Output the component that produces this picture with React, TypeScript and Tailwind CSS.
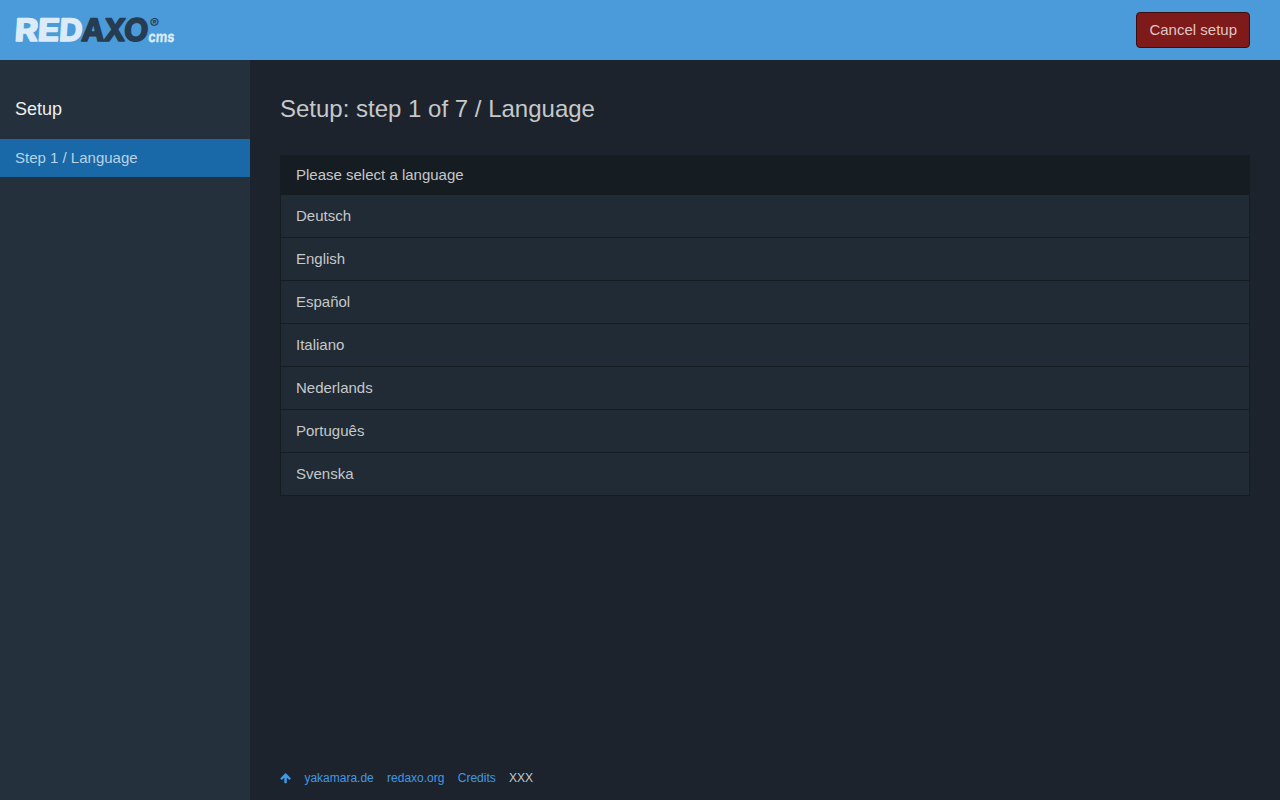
import React from "react";

const languages = ["Deutsch", "English", "Español", "Italiano", "Nederlands", "Português", "Svenska"];

function Logo() {
  return (
    <svg
      width="160"
      height="26"
      viewBox="0 0 160 26"
      role="img"
      aria-label="REDAXO CMS"
      className="block overflow-visible font-['Inter',sans-serif] font-bold not-italic"
    >
      <g transform="translate(0 25) skewX(-4)" strokeLinejoin="round">
        <g fontSize="31" strokeWidth="1.6">
          <g className="fill-[#dbebf7] stroke-[#dbebf7]">
            <text x="-1.2" y="-1" textLength="23.5" lengthAdjust="spacingAndGlyphs">R</text>
            <text x="22" y="-1" textLength="22" lengthAdjust="spacingAndGlyphs">E</text>
            <text x="43.4" y="-1" textLength="23.5" lengthAdjust="spacingAndGlyphs">D</text>
          </g>
          <g className="fill-[#253c52] stroke-[#253c52]">
            <text x="66" y="-1" textLength="23" lengthAdjust="spacingAndGlyphs">A</text>
            <text x="88" y="-1" textLength="22" lengthAdjust="spacingAndGlyphs">X</text>
            <text x="108.2" y="-1" textLength="24.5" lengthAdjust="spacingAndGlyphs">O</text>
          </g>
        </g>
        <text x="133.3" y="-13.8" fontSize="13.5" textLength="9.5" lengthAdjust="spacingAndGlyphs" className="fill-[#253c52]">®</text>
        <text x="133" y="-0.3" fontSize="15" textLength="26" lengthAdjust="spacingAndGlyphs" strokeWidth="0.3" className="fill-[#dbebf7] stroke-[#dbebf7]">cms</text>
      </g>
    </svg>
  );
}

function ArrowUp() {
  return (
    <svg width="12" height="12" viewBox="0 0 1792 1792" fill="currentColor" className="-mt-px -mr-[0.9px]" aria-hidden="true">
      <path d="M1611 971q0 51-37 90l-75 75q-38 38-91 38-54 0-90-38l-294-293v704q0 52-37.5 84.5t-90.5 32.5h-128q-53 0-90.5-32.5t-37.5-84.5v-704l-294 293q-36 38-90 38t-90-38l-75-75q-38-38-38-90 0-53 38-91l651-651q35-37 90-37 54 0 91 37l651 651q37 39 37 91z" />
    </svg>
  );
}

export default function App() {
  return (
    <div className="flex h-screen flex-col bg-[#1c232c] font-['Liberation_Sans',Arial,sans-serif] text-[15px] leading-[22px] text-[#c6c8ca]">
      <header className="flex h-[60px] shrink-0 items-center justify-between bg-[#4b9ad9] pr-[30px] pl-[15px]">
        <Logo />
        <button className="h-9 rounded border border-[#3c0d0d] bg-[#7f1a1a] px-3 text-[15px] leading-[22px] text-[#dfc6c6]">
          Cancel setup
        </button>
      </header>
      <div className="flex min-h-0 flex-1">
        <nav className="w-[250px] shrink-0 bg-[#24303b] pt-9">
          <h4 className="px-[15px] text-lg leading-[26px] text-[#eeeff0]">Setup</h4>
          <a href="#" className="mt-[17px] block h-[38px] bg-[#1968a8] px-[15px] py-2 text-[#bad2e5]">
            Step 1 / Language
          </a>
        </nav>
        <main className="flex min-w-0 flex-1 flex-col px-[30px] pt-[35px]">
          <h1 className="text-2xl leading-7">Setup: step 1 of 7 / Language</h1>
          <section className="mt-8 border border-[#151c22]">
            <h2 className="h-[39px] bg-[#151c22] px-[15px] pt-2">Please select a language</h2>
            <ul className="divide-y divide-[#151c22] bg-[#202b35]">
              {languages.map((language) => (
                <li key={language}>
                  <a href="#" className="block px-[15px] py-2.5">{language}</a>
                </li>
              ))}
            </ul>
          </section>
          <footer className="mt-auto flex h-8 gap-[13.3px] text-xs leading-5 text-[#4198e3]">
            <a href="#top" aria-label="Back to top" className="flex h-5 items-center">
              <ArrowUp />
            </a>
            <a href="#">yakamara.de</a>
            <a href="#">redaxo.org</a>
            <a href="#">Credits</a>
            <span className="text-[#c6c8ca]">XXX</span>
          </footer>
        </main>
      </div>
    </div>
  );
}
